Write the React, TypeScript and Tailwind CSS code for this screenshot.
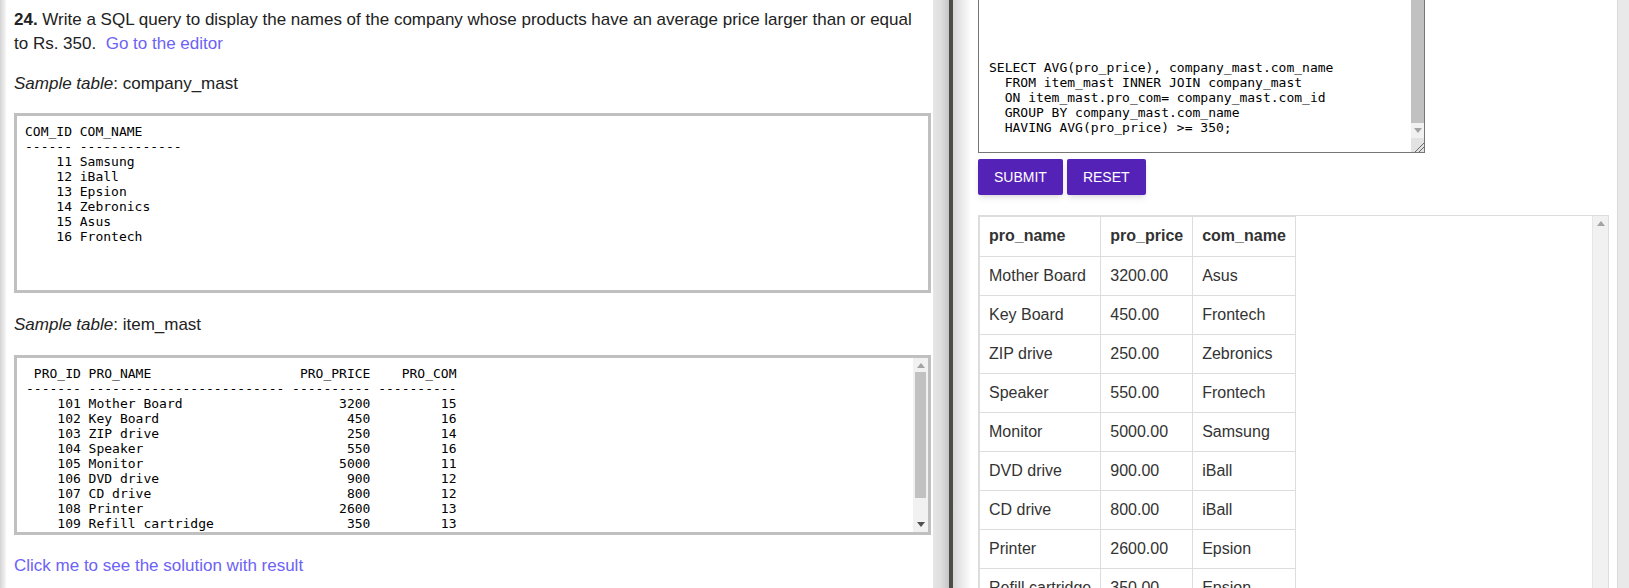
import React from 'react';

const companies = [
  ['11', 'Samsung'],
  ['12', 'iBall'],
  ['13', 'Epsion'],
  ['14', 'Zebronics'],
  ['15', 'Asus'],
  ['16', 'Frontech'],
];

const items = [
  ['101', 'Mother Board', '3200', '15'],
  ['102', 'Key Board', '450', '16'],
  ['103', 'ZIP drive', '250', '14'],
  ['104', 'Speaker', '550', '16'],
  ['105', 'Monitor', '5000', '11'],
  ['106', 'DVD drive', '900', '12'],
  ['107', 'CD drive', '800', '12'],
  ['108', 'Printer', '2600', '13'],
  ['109', 'Refill cartridge', '350', '13'],
];

const results = [
  ['Mother Board', '3200.00', 'Asus'],
  ['Key Board', '450.00', 'Frontech'],
  ['ZIP drive', '250.00', 'Zebronics'],
  ['Speaker', '550.00', 'Frontech'],
  ['Monitor', '5000.00', 'Samsung'],
  ['DVD drive', '900.00', 'iBall'],
  ['CD drive', '800.00', 'iBall'],
  ['Printer', '2600.00', 'Epsion'],
  ['Refill cartridge', '350.00', 'Epsion'],
];

const companyText = [
  'COM_ID COM_NAME',
  '------ -------------',
  ...companies.map(([id, name]) => `${id.padStart(6)} ${name}`),
].join('\n');

const itemText = [
  ' PRO_ID PRO_NAME' + ' '.repeat(19) + 'PRO_PRICE    PRO_COM',
  '------- ------------------------- ---------- ----------',
  ...items.map(([id, name, price, com]) => `${id.padStart(7)} ${name.padEnd(25)} ${price.padStart(10)} ${com.padStart(10)}`),
].join('\n');

const sql = [
  'SELECT AVG(pro_price), company_mast.com_name',
  '  FROM item_mast INNER JOIN company_mast',
  '  ON item_mast.pro_com= company_mast.com_id',
  '  GROUP BY company_mast.com_name',
  '  HAVING AVG(pro_price) >= 350;',
].join('\n');

function Arrow({ dir, color }: { dir: 'up' | 'down'; color: string }) {
  return (
    <svg width="8" height="5" viewBox="0 0 8 5">
      {dir === 'up' ? <polygon points="0,5 8,5 4,0" fill={color} /> : <polygon points="0,0 8,0 4,5" fill={color} />}
    </svg>
  );
}

export default function App() {
  const mono = "font-['DejaVu_Sans_Mono','Liberation_Mono',monospace] text-[13px] leading-[15px]";

  return (
    <div className="flex h-[588px] w-[1629px] overflow-hidden bg-white font-['Liberation_Sans',Arial,sans-serif] text-[#222]">
      {/* left edge */}
      <div className="w-[6px] shrink-0 bg-linear-to-r from-[#d4d4d4] to-[#f7f7f7]" />

      {/* question panel */}
      <div className="w-[927px] shrink-0 pl-[8px] pr-[2px] pt-[8px]">
        <p className="pr-[8px] text-[17px] leading-[24px]">
          <b>24.</b> Write a SQL query to display the names of the company whose products have an average price larger than or equal to Rs. 350.&nbsp;{' '}
          <a className="text-[#6c62f5]">Go to the editor</a>
        </p>
        <p className="mt-[16px] text-[17px] leading-[24px]">
          <i>Sample table</i>: company_mast
        </p>
        <div className="mt-[17px] h-[180px] border-[3px] border-[#c0c0c0] bg-white p-[8px]">
          <pre className={mono + ' text-black'}>{companyText}</pre>
        </div>
        <p className="mt-[20px] text-[17px] leading-[24px]">
          <i>Sample table</i>: item_mast
        </p>
        <div className="mt-[18px] flex h-[180px] border-[3px] border-[#c0c0c0] bg-white">
          <div className="flex-1 overflow-hidden pl-[9px] pt-[8px]">
            <pre className={mono + ' text-black'}>{itemText}</pre>
          </div>
          <div className="flex w-[15px] flex-col bg-[#f1f1f1]">
            <div className="flex h-[14px] items-center justify-center">
              <Arrow dir="up" color="#a3a3a3" />
            </div>
            <div className="mx-[2px] h-[126px] bg-[#c1c1c1]" />
            <div className="flex-1" />
            <div className="flex h-[15px] items-center justify-center">
              <Arrow dir="down" color="#505050" />
            </div>
          </div>
        </div>
        <p className="mt-[19px] text-[17px] leading-[24px] text-[#6c62f5]">Click me to see the solution with result</p>
      </div>

      {/* splitter */}
      <div className="w-[16px] shrink-0 bg-linear-to-r from-[#e6e6e6] via-[#dedede] to-[#c6c6c6]" />
      <div className="w-[4px] shrink-0 bg-[#4d4d48]" />
      <div className="w-[17px] shrink-0 bg-linear-to-r from-[#d8d8d8] to-[#fbfbfb]" />

      {/* editor panel */}
      <div className="flex-1 pl-[8px]">
        <div className="flex h-[153px] w-[447px] border-x border-b border-[#767676] bg-white">
          <div className="flex-1 overflow-hidden pl-[10px] pt-[60px]">
            <pre className={mono + ' text-black'}>{sql}</pre>
          </div>
          <div className="flex w-[13px] flex-col bg-[#f1f1f1]">
            <div className="h-[123px] bg-[#c1c1c1]" />
            <div className="flex h-[15px] items-center justify-center">
              <Arrow dir="down" color="#a3a3a3" />
            </div>
            <div className="flex flex-1 items-end justify-end bg-[#e2e2e2]">
              <svg width="12" height="12" viewBox="0 0 12 12">
                <line x1="3" y1="12" x2="12" y2="3" stroke="#666" strokeWidth="1" />
                <line x1="7" y1="12" x2="12" y2="7" stroke="#666" strokeWidth="1" />
              </svg>
            </div>
          </div>
        </div>

        <div className="mt-[6px] flex gap-[4px]">
          <button className="h-[36px] rounded-[2px] bg-[#5522b8] px-4 text-[14px] text-white shadow-md">SUBMIT</button>
          <button className="h-[36px] rounded-[2px] bg-[#5522b8] px-4 text-[14px] text-white shadow-md">RESET</button>
        </div>

        <div className="mt-[20px] flex h-[420px] w-[631px] border border-[#dddddd] bg-white">
          <div className="flex-1">
            <table className="border-collapse text-[16px] leading-[22px] text-[#333]">
              <thead>
                <tr>
                  <th className="border border-[#dddddd] px-[9px] pb-[9px] pt-[8px] text-left font-bold">pro_name</th>
                  <th className="border border-[#dddddd] px-[9px] pb-[9px] pt-[8px] text-left font-bold">pro_price</th>
                  <th className="border border-[#dddddd] px-[9px] pb-[9px] pt-[8px] text-left font-bold">com_name</th>
                </tr>
              </thead>
              <tbody>
                {results.map((r) => (
                  <tr key={r[0]}>
                    {r.map((c, i) => (
                      <td key={i} className="border border-[#dddddd] px-[9px] py-2">{c}</td>
                    ))}
                  </tr>
                ))}
              </tbody>
            </table>
          </div>
          <div className="flex w-[16px] flex-col items-center border-l border-[#e6e6e6] bg-[#f1f1f1] pt-[5px]">
            <Arrow dir="up" color="#a3a3a3" />
          </div>
        </div>
      </div>

      {/* page scrollbar */}
      <div className="w-[12px] shrink-0 border-l border-[#dadada] bg-[#e9e9e9]" />
    </div>
  );
}
